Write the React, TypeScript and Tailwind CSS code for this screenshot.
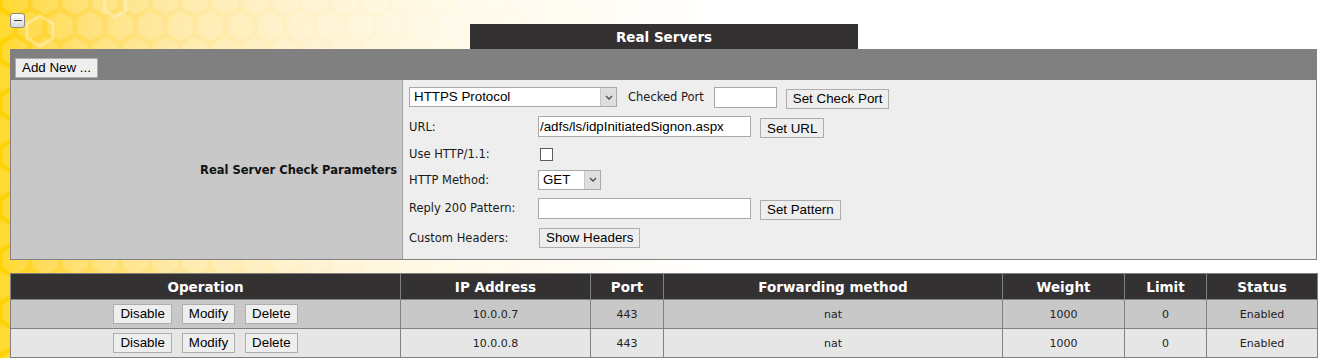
import React from "react";

const hex = (cx: number, cy: number, r: number) => {
  const pts: string[] = [];
  for (let i = 0; i < 6; i++) {
    const a = (Math.PI / 180) * (60 * i - 90);
    pts.push(`${(cx + r * Math.cos(a)).toFixed(2)},${(cy + r * Math.sin(a)).toFixed(2)}`);
  }
  return pts.join(" ");
};

function Backdrop() {
  return (
    <div className="absolute inset-0 bg-[linear-gradient(to_right,#ffd200_0px,#ffd42a_30px,#ffdc60_90px,#ffe799_180px,#fff1c8_300px,#fff9e6_450px,#ffffff_720px)]">
      <svg width="1332" height="358" className="block">
        <defs>
          <pattern id="hx" width="30" height="52" patternUnits="userSpaceOnUse">
            <polygon points={hex(15, 0, 14.5)} fill="#fff" />
            <polygon points={hex(15, 52, 14.5)} fill="#fff" />
            <polygon points={hex(0, 26, 14.5)} fill="#fff" />
            <polygon points={hex(30, 26, 14.5)} fill="#fff" />
          </pattern>
          <linearGradient id="fade" x1="0" x2="1" y1="0" y2="0">
            <stop offset="0" stopColor="#fff" stopOpacity="0.18" />
            <stop offset="0.4" stopColor="#fff" stopOpacity="0.2" />
            <stop offset="0.7" stopColor="#fff" stopOpacity="0" />
          </linearGradient>
          <mask id="m">
            <rect width="1332" height="358" fill="url(#fade)" />
          </mask>
        </defs>
        <rect width="1332" height="358" fill="url(#hx)" mask="url(#m)" />
        <polygon points={hex(40, 31, 15)} fill="none" stroke="#fff" strokeOpacity="0.35" strokeWidth="3" />
        <polygon points={hex(115, 5, 12)} fill="none" stroke="#fff" strokeOpacity="0.3" strokeWidth="3" />
      </svg>
    </div>
  );
}

function Btn({ children }: { children: React.ReactNode }) {
  return (
    <button
      type="button"
      className="h-[20px] px-[6px] border border-[#adadad] bg-[#eeeeee] text-[13.33px] leading-none text-black font-['Liberation_Sans',Arial,sans-serif] whitespace-nowrap"
    >
      {children}
    </button>
  );
}

function Chevron() {
  return (
    <svg width="8" height="5" viewBox="0 0 8 5">
      <path d="M1 1 L4 4 L7 1" fill="none" stroke="#555" strokeWidth="1.5" />
    </svg>
  );
}

function Select({ value, w }: { value: string; w: string }) {
  return (
    <div className={`${w} h-[20px] flex border border-[#a9a9a9] bg-white`}>
      <span className="flex-1 pl-[4px] flex items-center text-[13.33px] text-black font-['Liberation_Sans',Arial,sans-serif]">
        {value}
      </span>
      <span className="w-[16px] flex items-center justify-center bg-[#dedede] border-l border-[#c8c8c8]">
        <Chevron />
      </span>
    </div>
  );
}

function TextBox({ w, value = "" }: { w: string; value?: string }) {
  return (
    <div
      className={`${w} h-[21px] flex items-center border border-[#a9a9a9] bg-white pl-[1px] text-[13.33px] text-black font-['Liberation_Sans',Arial,sans-serif] overflow-hidden whitespace-nowrap`}
    >
      {value}
    </div>
  );
}

const label = "pt-[2px] text-[11.5px] text-[#1a1a1a] font-['DejaVu_Sans',Verdana,sans-serif]";

const cols = [
  { name: "Operation", w: "w-[390px]" },
  { name: "IP Address", w: "w-[190px]" },
  { name: "Port", w: "w-[73px]" },
  { name: "Forwarding method", w: "w-[339px]" },
  { name: "Weight", w: "w-[122px]" },
  { name: "Limit", w: "w-[82px]" },
  { name: "Status", w: "w-[111px]" },
];

const servers = [
  { ip: "10.0.0.7", port: "443", fwd: "nat", weight: "1000", limit: "0", status: "Enabled", bg: "bg-[#c8c8c8]" },
  { ip: "10.0.0.8", port: "443", fwd: "nat", weight: "1000", limit: "0", status: "Enabled", bg: "bg-[#e6e6e6]" },
];

export default function App() {
  return (
    <div className="relative w-[1332px] h-[358px] overflow-hidden">
      <Backdrop />
      <div className="relative">
        {/* Title row */}
        <div className="h-[49px] grid grid-cols-[470px_388px_1fr]">
          <div>
            <button
              type="button"
              className="mt-[13px] ml-[10px] w-[15px] h-[15px] rounded-[3px] border border-[#8a8a8a] bg-[linear-gradient(#ffffff,#d9d9d9)] flex items-center justify-center"
            >
              <span className="block w-[8px] h-[1px] bg-[#444]" />
            </button>
          </div>
          <div className="mt-[24px] h-[25px] pt-[2px] bg-[#333132] flex items-center justify-center text-white font-bold text-[13.5px] font-['DejaVu_Sans',Verdana,sans-serif]">
            Real Servers
          </div>
        </div>

        {/* Toolbar */}
        <div className="ml-[10px] w-[1307px] h-[31px] bg-[#808080] pl-[5px] pt-[5px]">
          <Btn>Add New ...</Btn>
        </div>

        {/* Check parameters */}
        <div className="ml-[10px] w-[1307px] h-[180px] flex border-x border-b border-[#808080]">
          <div className="w-[392px] bg-[#c8c8c8] border-r border-[#a4a4a4] flex items-center justify-end pr-[5px] pt-[3px]">
            <span className="text-[11.5px] font-bold text-[#111] font-['DejaVu_Sans',Verdana,sans-serif]">
              Real Server Check Parameters
            </span>
          </div>
          <div className="flex-1 bg-[#eeeeee] pl-[6px] pt-[2px]">
            <div className="h-[30px] flex items-center">
              <Select value="HTTPS Protocol" w="w-[208px]" />
              <span className={`${label} ml-[11px]`}>Checked Port</span>
              <div className="ml-[10px]">
                <TextBox w="w-[63px]" />
              </div>
              <div className="ml-[9px]">
                <Btn>Set Check Port</Btn>
              </div>
            </div>
            <div className="h-[29px] flex items-center">
              <span className={`${label} w-[129px]`}>URL:</span>
              <TextBox w="w-[213px]" value="/adfs/ls/idpInitiatedSignon.aspx" />
              <div className="ml-[9px]">
                <Btn>Set URL</Btn>
              </div>
            </div>
            <div className="h-[26px] flex items-center">
              <span className={`${label} w-[129px]`}>Use HTTP/1.1:</span>
              <span className="ml-[2px] w-[13px] h-[13px] border border-[#5c5c5c] bg-white" />
            </div>
            <div className="h-[25px] flex items-center">
              <span className={`${label} w-[129px]`}>HTTP Method:</span>
              <Select value="GET" w="w-[63px]" />
            </div>
            <div className="h-[32px] flex items-center">
              <span className={`${label} w-[129px]`}>Reply 200 Pattern:</span>
              <TextBox w="w-[213px]" />
              <div className="ml-[9px]">
                <Btn>Set Pattern</Btn>
              </div>
            </div>
            <div className="h-[28px] flex items-center">
              <span className={`${label} w-[130px]`}>Custom Headers:</span>
              <Btn>Show Headers</Btn>
            </div>
          </div>
        </div>

        {/* Servers table */}
        <table className="mt-[13px] ml-[10px] w-[1307px] table-fixed border-collapse">
          <colgroup>
            {cols.map((c) => (
              <col key={c.name} className={c.w} />
            ))}
          </colgroup>
          <thead>
            <tr>
              {cols.map((c) => (
                <th
                  key={c.name}
                  className="h-[26px] p-0 pt-[2px] border border-[#808080] bg-[#333132] text-white font-bold text-[13.5px] font-['DejaVu_Sans',Verdana,sans-serif]"
                >
                  {c.name}
                </th>
              ))}
            </tr>
          </thead>
          <tbody>
            {servers.map((s) => (
              <tr key={s.ip} className={s.bg}>
                <td className="h-[29px] p-0 border border-[#808080]">
                  <div className="flex justify-center gap-[10px]">
                    <Btn>Disable</Btn>
                    <Btn>Modify</Btn>
                    <Btn>Delete</Btn>
                  </div>
                </td>
                {[s.ip, s.port, s.fwd, s.weight, s.limit, s.status].map((v, i) => (
                  <td
                    key={i}
                    className="h-[29px] p-0 pt-[2px] border border-[#808080] text-center text-[11px] text-[#222] font-['DejaVu_Sans',Verdana,sans-serif]"
                  >
                    {v}
                  </td>
                ))}
              </tr>
            ))}
          </tbody>
        </table>
      </div>
    </div>
  );
}
